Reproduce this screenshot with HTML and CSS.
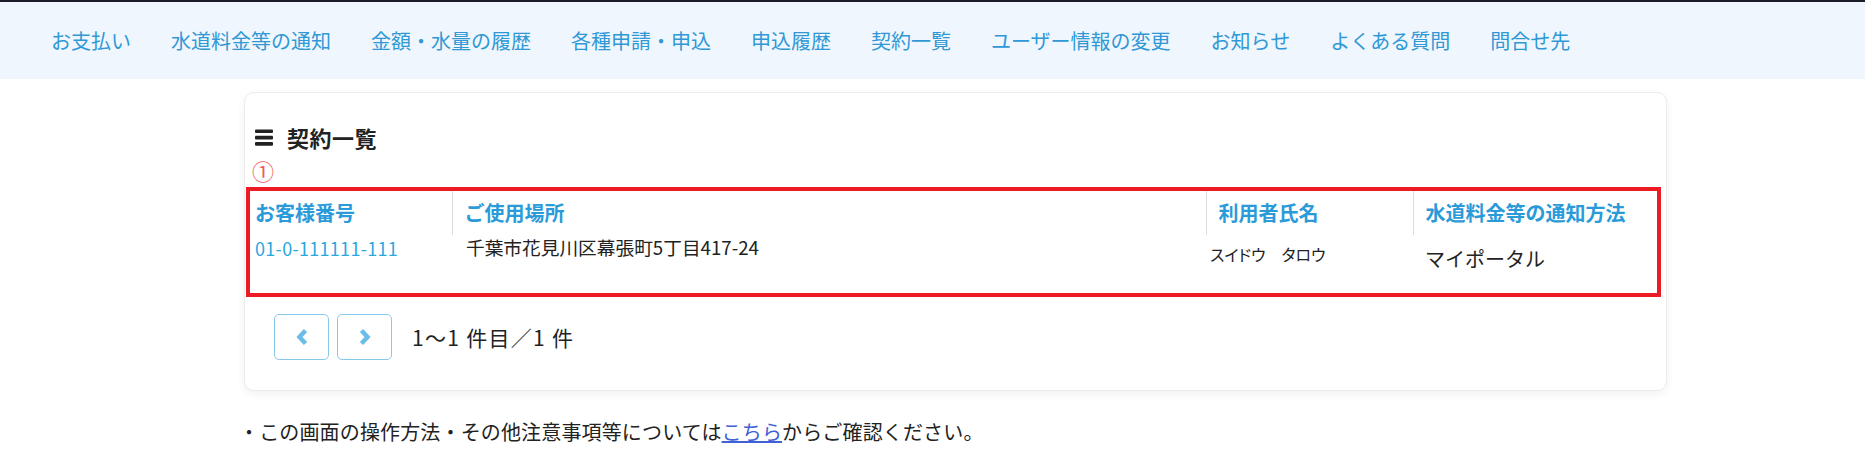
FILE: index.html
```html
<!DOCTYPE html>
<html lang="ja">
<head>
  <meta charset="UTF-8">
  <title>契約一覧</title>
  <link rel="stylesheet" href="styles.css">
</head>
<body>

  <nav class="global-nav">
    <a href="#">お支払い</a>
    <a href="#">水道料金等の通知</a>
    <a href="#">金額・水量の履歴</a>
    <a href="#">各種申請・申込</a>
    <a href="#">申込履歴</a>
    <a href="#">契約一覧</a>
    <a href="#">ユーザー情報の変更</a>
    <a href="#">お知らせ</a>
    <a href="#">よくある質問</a>
    <a href="#">問合せ先</a>
  </nav>

  <main class="content">
    <div class="card">
      <h2 class="card-title">
        <svg class="title-icon" width="18" height="17" viewBox="0 0 18 17">
          <rect x="0" y="0.5" width="18" height="3.6" rx="1"/>
          <rect x="0" y="6.8" width="18" height="3.6" rx="1"/>
          <rect x="0" y="13.1" width="18" height="3.6" rx="1"/>
        </svg>
        契約一覧
      </h2>
      <div class="note-mark">①</div>

      <div class="highlight">
        <table class="contract-table">
          <colgroup>
            <col class="col-no">
            <col class="col-place">
            <col class="col-name">
            <col class="col-notice">
          </colgroup>
          <thead>
            <tr>
              <th>お客様番号</th>
              <th>ご使用場所</th>
              <th>利用者氏名</th>
              <th>水道料金等の通知方法</th>
            </tr>
          </thead>
          <tbody>
            <tr>
              <td class="cell-no"><a href="#">01-0-111111-111</a></td>
              <td class="cell-place">千葉市花見川区幕張町5丁目417-24</td>
              <td class="cell-name">スイドウ　タロウ</td>
              <td class="cell-notice">マイポータル</td>
            </tr>
          </tbody>
        </table>
      </div>

      <div class="pager">
        <button class="pager-btn" aria-label="前へ">
          <svg width="12" height="18" viewBox="0 0 12 18"><polyline points="9.5,2.5 3.5,9 9.5,15.5"/></svg>
        </button>
        <button class="pager-btn" aria-label="次へ">
          <svg width="12" height="18" viewBox="0 0 12 18"><polyline points="2.5,2.5 8.5,9 2.5,15.5"/></svg>
        </button>
        <span class="pager-count">1〜1 件目／1 件</span>
      </div>
    </div>

    <p class="footer-note">・この画面の操作方法・その他注意事項等については<a href="#">こちら</a>からご確認ください。</p>
  </main>

</body>
</html>
```

FILE: styles.css
```css
body {
  margin: 0;
  font-family: "Noto Sans CJK JP", "Noto Sans", sans-serif;
  background-color: #fff;
  color: #222;
}

.global-nav {
  display: flex;
  align-items: center;
  gap: 40px;
  height: 77px;
  padding-left: 51px;
  background-color: #f0f6fe;
  border-top: 2px solid #1b1c2a;
}

.global-nav a {
  font-size: 20px;
  line-height: 28px;
  color: #2f98d5;
  text-decoration: none;
}

.content {
  padding: 13px 0 0 244px;
}

.card {
  box-sizing: border-box;
  width: 1423px;
  padding: 29px 0 30px 0;
  background: #fff;
  border: 1px solid #ececec;
  border-radius: 10px;
  box-shadow: 0 3px 8px rgba(0, 0, 0, 0.06);
}

.card-title {
  display: flex;
  align-items: center;
  gap: 14px;
  margin: 0 0 6px 0;
  padding-left: 10px;
  font-size: 22px;
  line-height: 30px;
  font-weight: bold;
  letter-spacing: 0.5px;
  color: #222;
}

.title-icon {
  fill: #222;
}

.note-mark {
  padding-left: 7px;
  font-size: 22px;
  line-height: 24px;
  color: #f05a5a;
}

.highlight {
  margin: 5px 5px 0 1px;
  border: 4px solid #ed1c24;
}

.contract-table {
  width: 100%;
  table-layout: fixed;
  border-collapse: collapse;
}

.col-no { width: 202px; }
.col-place { width: 754px; }
.col-name { width: 207px; }
.col-notice { width: 244px; }

.contract-table th {
  height: 44px;
  padding: 0 12px;
  font-size: 20px;
  line-height: 28px;
  font-weight: bold;
  text-align: left;
  color: #2a9ad8;
  border-left: 1px solid #dcdcdc;
  vertical-align: middle;
}

.contract-table th:first-child {
  padding-left: 5px;
  border-left: none;
}

.contract-table td {
  height: 58px;
  box-sizing: border-box;
  vertical-align: top;
  line-height: 24px;
  color: #222;
}

.cell-no {
  padding: 1px 0 0 5px;
  font-size: 18px;
  letter-spacing: 0.3px;
}

.cell-no a {
  color: #2aa7e0;
  text-decoration: none;
}

.cell-place {
  padding: 0 0 0 14px;
  font-size: 18.7px;
  color: #333;
}

.cell-name {
  padding: 7px 0 0 4px;
  font-size: 16px;
  font-feature-settings: "palt";
  color: #333;
}

.cell-notice {
  padding: 12px 0 0 12px;
  font-size: 20px;
}

.pager {
  display: flex;
  align-items: center;
  gap: 8px;
  margin: 17px 0 0 29px;
}

.pager-btn {
  display: flex;
  align-items: center;
  justify-content: center;
  width: 55px;
  height: 46px;
  padding: 0;
  background: #fff;
  border: 1px solid #86c9ec;
  border-radius: 5px;
}

.pager-btn polyline {
  fill: none;
  stroke: #6cbce8;
  stroke-width: 4.5;
}

.pager-count {
  margin-left: 12px;
  font-size: 21px;
  letter-spacing: 1.3px;
  color: #222;
}

.footer-note {
  margin: 27px 0 0 -5px;
  font-size: 20px;
  line-height: 28px;
  letter-spacing: 0.15px;
  color: #222;
}

.footer-note a {
  color: #4060d8;
}
```
